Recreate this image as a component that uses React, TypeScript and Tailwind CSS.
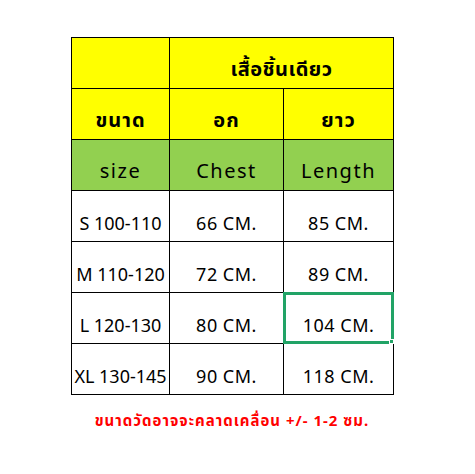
const ROWS = [
  { size: "S 100-110", chest: "66 CM.", length: "85 CM." },
  { size: "M 110-120", chest: "72 CM.", length: "89 CM." },
  { size: "L 120-130", chest: "80 CM.", length: "104 CM.", selected: true },
  { size: "XL 130-145", chest: "90 CM.", length: "118 CM." },
]

const cell = "border border-black h-[51px] p-0 pb-[4px] align-bottom text-center"

export default function App() {
  return (
    <div className="w-[475px] h-[474px] bg-white pt-[37px] pl-[71px] font-['Noto_Sans','Noto_Sans_Thai',sans-serif] text-black">
      <table className="border-collapse table-fixed w-[322px]">
        <colgroup>
          <col className="w-[98px]" />
          <col className="w-[114px]" />
          <col className="w-[110px]" />
        </colgroup>
        <tbody>
          <tr className="bg-[#ffff00]">
            <td className={cell}></td>
            <td colSpan={2} className={`${cell} text-[20px] font-bold tracking-[0.5px]`}>
              เสื้อชิ้นเดียว
            </td>
          </tr>
          <tr className="bg-[#ffff00] text-[20px] font-bold tracking-[1px]">
            <td className={cell}>ขนาด</td>
            <td className={cell}>อก</td>
            <td className={cell}>ยาว</td>
          </tr>
          <tr className="bg-[#92d050] text-[20px] tracking-[1.5px]">
            <td className={cell}>size</td>
            <td className={cell}>Chest</td>
            <td className={cell}>Length</td>
          </tr>
          {ROWS.map((row) => (
            <tr key={row.size} className="text-[18px] tracking-[0.5px]">
              <td className={`${cell} whitespace-nowrap tracking-normal`}>{row.size}</td>
              <td className={cell}>{row.chest}</td>
              <td className={`${cell} relative`}>
                {row.length}
                {row.selected && (
                  <div className="absolute -inset-[1px] border-[3px] border-[#21a366]">
                    <div className="absolute -right-[3px] -bottom-[3px] w-[5px] h-[5px] bg-[#21a366] border border-white" />
                  </div>
                )}
              </td>
            </tr>
          ))}
        </tbody>
      </table>
      <p className="mt-[14px] w-[322px] text-center text-[15px] font-bold tracking-[1px] text-[#ff0000]">
        ขนาดวัดอาจจะคลาดเคลื่อน +/- 1-2 ซม.
      </p>
    </div>
  )
}
